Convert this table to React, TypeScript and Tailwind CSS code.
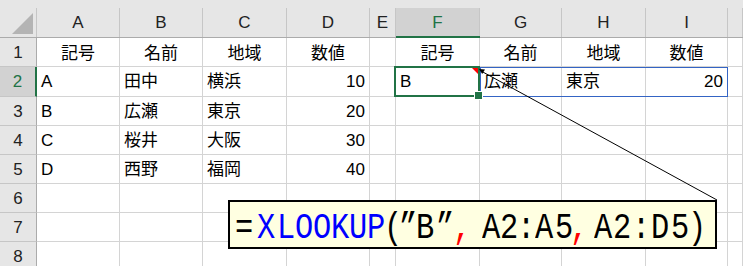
import React from "react";

const COLS = ["A", "B", "C", "D", "E", "F", "G", "H", "I", ""];

const DATA: string[][] = [
  ["記号", "名前", "地域", "数値", "", "記号", "名前", "地域", "数値", ""],
  ["A", "田中", "横浜", "10", "", "B", "広瀬", "東京", "20", ""],
  ["B", "広瀬", "東京", "20", "", "", "", "", "", ""],
  ["C", "桜井", "大阪", "30", "", "", "", "", "", ""],
  ["D", "西野", "福岡", "40", "", "", "", "", "", ""],
  ["", "", "", "", "", "", "", "", "", ""],
  ["", "", "", "", "", "", "", "", "", ""],
  ["", "", "", "", "", "", "", "", "", ""],
];

const BLUE = "text-[#0000ff]";
const BLACK = "text-black";
const RED = "text-[#ff0000]";

const FORMULA: [string, string, string][] = [
  ["=", "w-[22px]", BLACK],
  ["X", "w-[22px]", BLUE],
  ["L", "w-[18px]", BLUE],
  ["O", "w-[18px]", BLUE],
  ["O", "w-[18px]", BLUE],
  ["K", "w-[18px]", BLUE],
  ["U", "w-[18px]", BLUE],
  ["P", "w-[18px]", BLUE],
  ["(", "w-[16px]", BLACK],
  ["”", "w-[14px]", BLACK],
  ["B", "w-[20px]", BLACK],
  ["”", "w-[20px]", BLACK],
  [",", "w-[14px]", RED],
  [" ", "w-[13px]", BLACK],
  ["A", "w-[18px]", BLACK],
  ["2", "w-[18px]", BLACK],
  [":", "w-[16px]", BLACK],
  ["A", "w-[20px]", BLACK],
  ["5", "w-[20px]", BLACK],
  [",", "w-[10px]", RED],
  [" ", "w-[10px]", BLACK],
  ["A", "w-[18px]", BLACK],
  ["2", "w-[20px]", BLACK],
  [":", "w-[18px]", BLACK],
  ["D", "w-[20px]", BLACK],
  ["5", "w-[20px]", BLACK],
  [")", "w-[14px]", BLACK],
];

const FONT = "font-['Liberation_Sans','Noto_Sans_CJK_JP',sans-serif]";

function isNum(s: string) {
  return /^[0-9]+$/.test(s);
}

export default function App() {
  return (
    <div className={`relative w-[743px] h-[266px] overflow-hidden bg-white ${FONT} text-[17px] leading-none`}>
      <div className="grid grid-cols-[37px_83px_83px_84px_83px_26px_84px_82px_84px_82px_1fr] grid-rows-[38px_29px_30px_29px_29px_29px_29px_29px_29px]">
        {/* corner */}
        <div className="bg-[#e6e6e6] border-b border-[#ababab] pt-[8px] flex flex-col">
          <div className="flex-1 border-r border-[#c6c6c6] flex items-end justify-end">
            <svg width="36" height="29" viewBox="0 0 36 29" className="block">
              <polygon points="12,26 33,26 33,5" fill="#b4b4b4" />
            </svg>
          </div>
        </div>
        {COLS.map((c, i) => {
          const sel = c === "F";
          return (
            <div
              key={"h" + i}
              className={
                sel
                  ? "bg-[#e6e6e6] border-b-2 border-[#217346] pt-[8px] flex flex-col"
                  : "bg-[#e6e6e6] border-b border-[#ababab] pt-[8px] flex flex-col"
              }
            >
              <div
                className={
                  sel
                    ? "flex-1 bg-[#d2d2d2] border-r border-[#c6c6c6] flex items-center justify-center text-[#217346] pt-[1px]"
                    : "flex-1 border-r border-[#c6c6c6] flex items-center justify-center text-[#222222]"
                }
              >
                {c}
              </div>
            </div>
          );
        })}
        {DATA.map((row, r) => (
          <React.Fragment key={"r" + r}>
            <div
              className={
                r === 1
                  ? "bg-[#d2d2d2] border-b border-[#c6c6c6] border-r-2 border-r-[#217346] flex items-center justify-center text-[#217346]"
                  : "bg-[#e6e6e6] border-b border-[#c6c6c6] border-r border-r-[#ababab] flex items-center justify-center text-[#222222]"
              }
            >
              {r + 1}
            </div>
            {row.map((v, c) => {
              const align =
                r === 0
                  ? "justify-center pt-[2px]"
                  : isNum(v)
                  ? "justify-end pr-[4px]"
                  : "justify-start pl-[4px]";
              return (
                <div
                  key={"c" + r + "-" + c}
                  className={`border-r border-b border-[#d4d4d4] flex items-center whitespace-nowrap text-black ${align}`}
                >
                  {v}
                </div>
              );
            })}
          </React.Fragment>
        ))}
      </div>

      {/* range highlight G2:I2 */}
      <div className="absolute left-[480px] top-[67px] w-[248px] h-[30px] border border-[#3464c4]" />
      {/* active cell F2 */}
      <div className="absolute left-[394px] top-[66px] w-[86px] h-[31px] border-2 border-[#217346]" />
      <div className="absolute left-[474px] top-[91px] w-[9px] h-[9px] border border-white bg-[#217346]" />

      <svg className="absolute left-0 top-0 pointer-events-none" width="743" height="266" viewBox="0 0 743 266">
        <polygon points="472,68 478,68 478,74" fill="#ff0000" />
        <line x1="481" y1="71" x2="717" y2="200" stroke="#000" strokeWidth="1" />
        <polygon points="479,69 482.2,74 485,69.5" fill="#000" />
      </svg>

      {/* callout */}
      <div className="absolute left-[228px] top-[200px] w-[489px] h-[49px] border-2 border-black bg-[#ffffe1] flex items-start pl-[3px] pt-[8px] font-['Liberation_Mono',monospace] text-[37px] leading-none">
        {FORMULA.map(([ch, w, col], i) => (
          <span key={i} className={`flex justify-center whitespace-pre ${w} ${col}`}>
            <span className="inline-block scale-x-[0.82]">{ch}</span>
          </span>
        ))}
      </div>
    </div>
  );
}
